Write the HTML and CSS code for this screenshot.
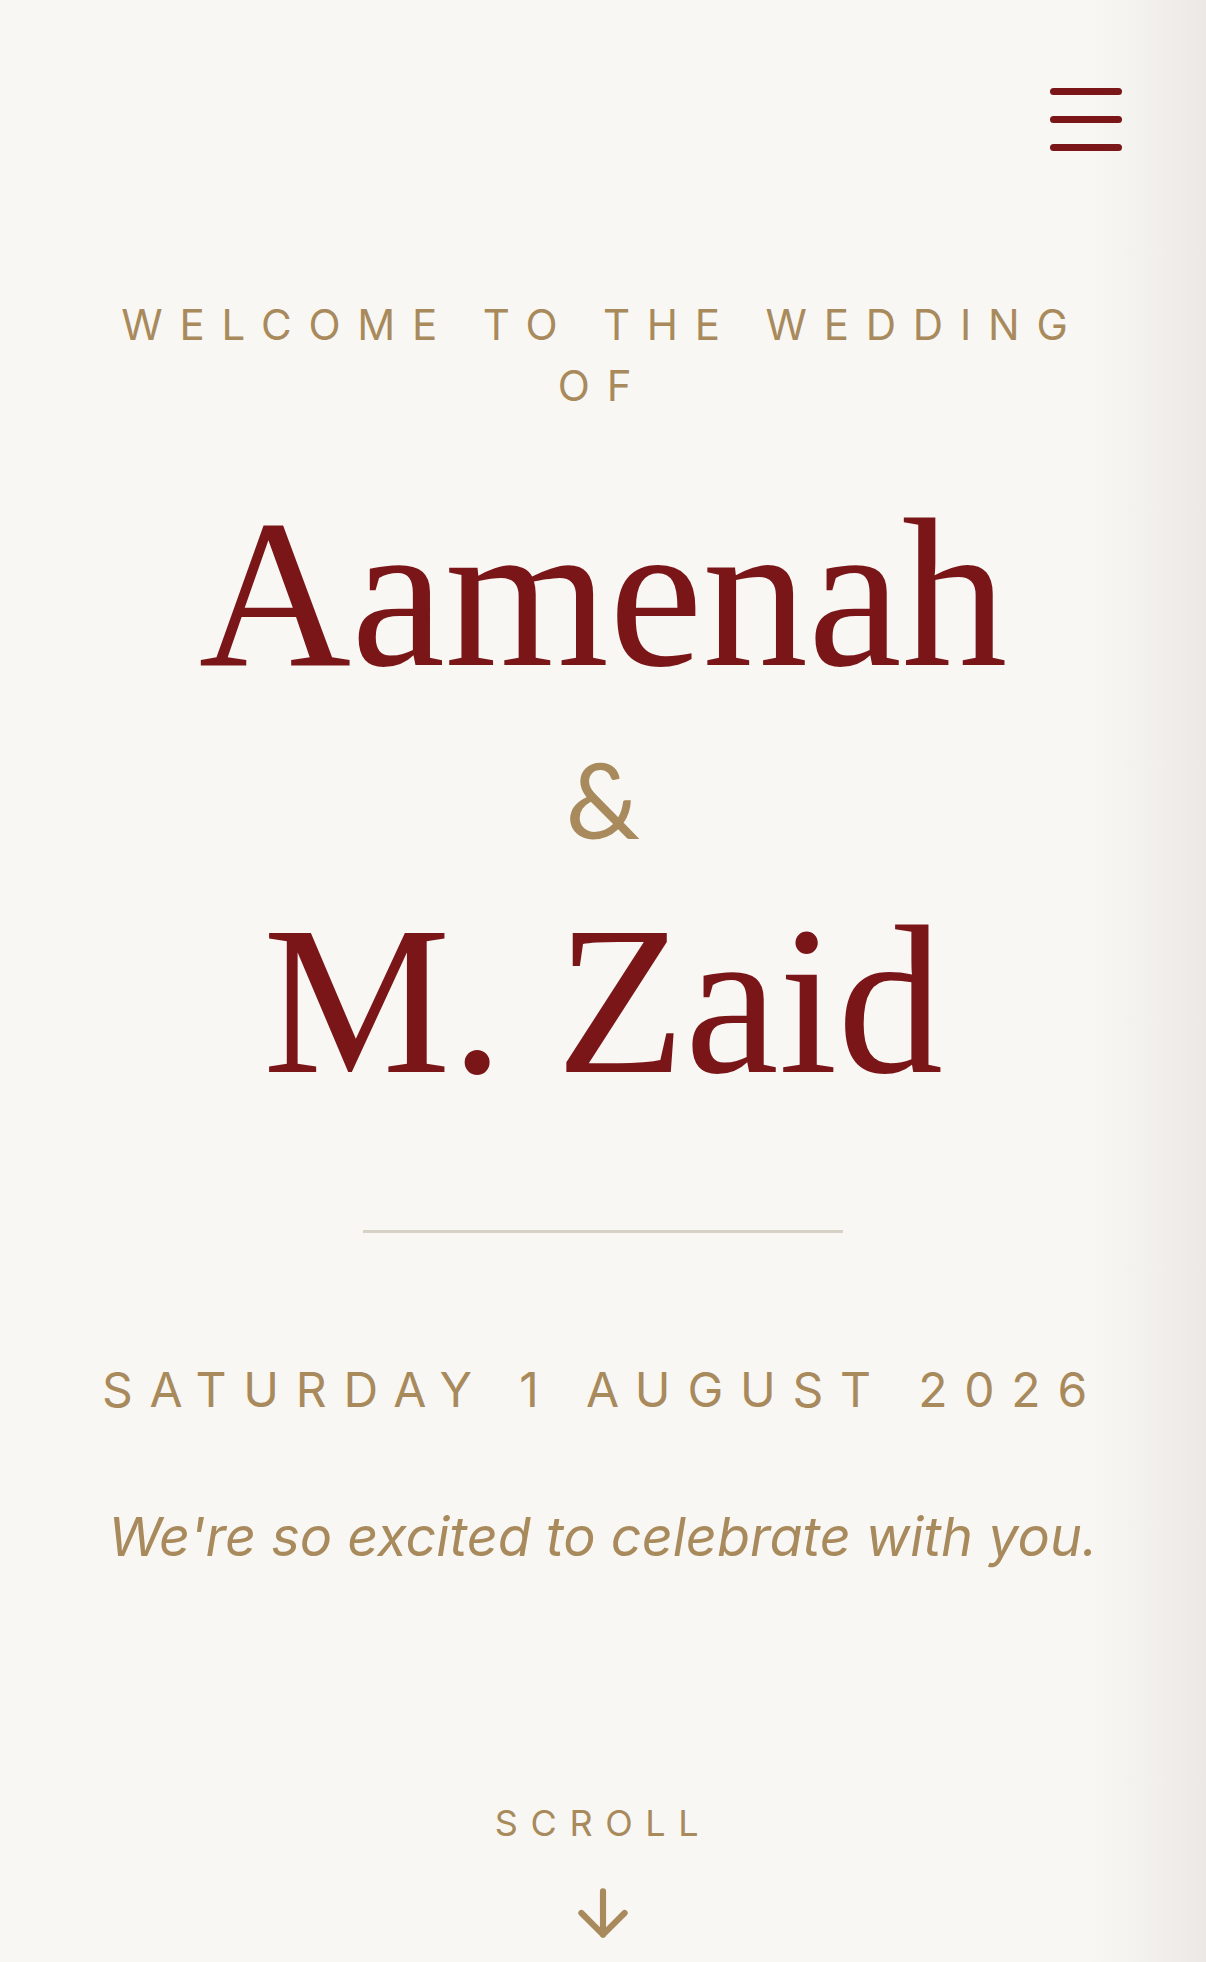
FILE: index.html
```html
<!DOCTYPE html>
<html lang="en">
<head>
<meta charset="utf-8">
<title>Aamenah &amp; M. Zaid</title>
<link rel="stylesheet" href="styles.css">
</head>
<body>
<div class="page">
  <header class="topbar">
    <button class="menu-btn" aria-label="Menu">
      <span class="bar"></span>
      <span class="bar"></span>
      <span class="bar"></span>
    </button>
  </header>
  <main class="hero">
    <p class="welcome">Welcome to the wedding of</p>
    <h1 class="names">
      <span class="name">Aamenah</span>
      <span class="amp">&amp;</span>
      <span class="name">M. Zaid</span>
    </h1>
    <div class="divider"></div>
    <p class="date">Saturday 1 August 2026</p>
    <p class="tagline">We're so excited to celebrate with you.</p>
    <div class="scroll">
      <span class="scroll-label">Scroll</span>
      <svg class="scroll-arrow" viewBox="0 0 24 24" fill="none" stroke="currentColor" stroke-width="2" stroke-linecap="round" stroke-linejoin="round"><path d="M12 5v14"/><path d="M19 12l-7 7-7-7"/></svg>
    </div>
  </main>
</div>
</body>
</html>
```

FILE: styles.css
```css
* { box-sizing: border-box; }
html, body {
  margin: 0;
  padding: 0;
}
body {
  background: linear-gradient(to right, #f9f7f4 0%, #f9f7f4 90%, #f3f1ee 95%, #ebe8e5 100%);
  color: #a88a5c;
  font-family: Inter, "Liberation Sans", sans-serif;
  height: 1962px;
  overflow: hidden;
}
.page {
  display: flex;
  flex-direction: column;
}
.topbar {
  display: flex;
  justify-content: flex-end;
  padding: 88px 84px 0 0;
}
.menu-btn {
  display: flex;
  flex-direction: column;
  gap: 21px;
  padding: 0;
  margin: 0;
  border: 0;
  background: none;
  cursor: pointer;
}
.bar {
  display: block;
  width: 72px;
  height: 7px;
  border-radius: 4px;
  background: #7a1518;
}
.hero {
  display: flex;
  flex-direction: column;
  align-items: center;
  text-align: center;
  width: 1030px;
  margin: 0 auto;
}
.welcome {
  margin: 143px 0 0 0;
  font-size: 42px;
  line-height: 61px;
  letter-spacing: 0.4em;
  text-transform: uppercase;
  color: #a88a5c;
}
.names {
  margin: 73px 0 0 0;
  font-weight: normal;
  display: flex;
  flex-direction: column;
  align-items: center;
}
.name {
  font-family: "Liberation Serif", serif;
  font-size: 211px;
  line-height: 211px;
  color: #7a1518;
  white-space: nowrap;
}
.amp {
  font-family: Lato, "Liberation Sans", sans-serif;
  font-size: 105px;
  line-height: 196px;
  color: #a88a5c;
}
.divider {
  width: 480px;
  height: 3px;
  background: #d8d1c5;
  margin-top: 123px;
}
.date {
  margin: 123px 0 0 0;
  font-size: 48px;
  line-height: 67px;
  letter-spacing: 0.35em;
  text-transform: uppercase;
  white-space: nowrap;
}
.tagline {
  margin: 75px 0 0 0;
  font-size: 54px;
  line-height: 77px;
  font-style: italic;
  white-space: nowrap;
}
.scroll {
  margin-top: 224px;
  display: flex;
  flex-direction: column;
  align-items: center;
  gap: 28px;
}
.scroll-label {
  font-size: 36px;
  line-height: 49px;
  letter-spacing: 0.35em;
  text-transform: uppercase;
}
.scroll-arrow {
  width: 74px;
  height: 74px;
  color: #a88a5c;
  display: block;
}
```
